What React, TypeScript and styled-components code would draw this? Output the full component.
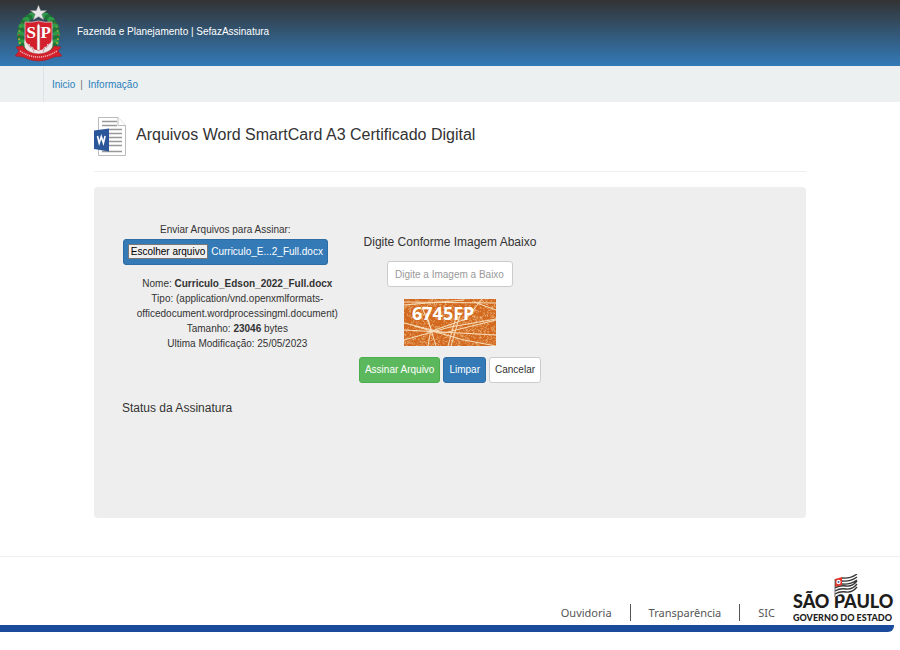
import React from "react";
import styled, { createGlobalStyle } from "styled-components";

const sans = `"Liberation Sans", Arial, sans-serif`;

const GlobalStyle = createGlobalStyle`
  *, *::before, *::after { box-sizing: border-box; }
  body {
    margin: 0;
    background: #fff;
    color: #333;
    font-family: ${sans};
    font-size: 10px;
    line-height: 15px;
  }
`;

const Header = styled.header`
  display: flex;
  align-items: center;
  gap: 15px;
  height: 66px;
  padding: 0 15px;
  background: linear-gradient(#333 0%, #337ab7 100%);
  color: #fff;
`;

const SiteName = styled.span`
  padding-bottom: 4px;
`;

const Nav = styled.nav`
  height: 36px;
  padding-left: 43px;
  background: #ecf0f1;
`;

const NavList = styled.ul`
  display: flex;
  align-items: center;
  height: 36px;
  margin: 0;
  padding: 0 8px;
  border-left: 1px solid #dde2e4;
  list-style: none;
`;

const NavItem = styled.li`
  & + &::before {
    content: "|";
    margin: 0 5px;
    color: #777;
  }
`;

const NavLink = styled.a`
  color: #2a80b9;
  text-decoration: none;
`;

const Main = styled.main`
  margin: 0 94px;
`;

const TitleBar = styled.div`
  display: flex;
  align-items: flex-start;
  gap: 10px;
  height: 70px;
  padding-top: 15px;
  border-bottom: 1px solid #eee;
`;

const Title = styled.h1`
  margin: 6px 0 0;
  font-size: 16px;
  font-weight: 400;
  line-height: 24px;
`;

const Panel = styled.section`
  display: grid;
  grid-template-columns: repeat(3, minmax(0, 1fr));
  align-content: start;
  min-height: 331px;
  margin-top: 15px;
  padding: 35px 28px;
  border-radius: 4px;
  background: #eee;
`;

const UploadColumn = styled.div`
  display: flex;
  flex-direction: column;
`;

const Upload = styled.div`
  display: flex;
  flex-direction: column;
  align-items: center;
  padding-right: 12px;
`;

const FileButton = styled.label`
  position: relative;
  display: flex;
  align-items: center;
  gap: 3px;
  height: 26px;
  margin-top: 2px;
  padding: 0 4px 1px;
  border: 1px solid #2e6da4;
  border-radius: 3px;
  background: #337ab7;
  color: #fff;
  white-space: nowrap;
`;

const FileInput = styled.input`
  position: absolute;
  inset: 0;
  width: 100%;
  opacity: 0;
`;

const FileTrigger = styled.span`
  padding: 0 2px;
  border: 1px solid #777;
  background: #efefef;
  color: #000;
  line-height: 13px;
`;

const FileInfo = styled.ul`
  margin: 11px 0 0;
  padding: 0 0 0 12px;
  list-style: none;
  text-align: center;
  overflow-wrap: break-word;
`;

const CaptchaColumn = styled.form`
  display: flex;
  flex-direction: column;
  align-items: center;
  padding-top: 10px;
`;

const CaptchaLabel = styled.label`
  font-size: 12px;
  line-height: 20px;
`;

const CaptchaInput = styled.input`
  width: 126px;
  height: 26px;
  margin: 9px 0 12px;
  padding: 0 7px;
  border: 1px solid #ccc;
  border-radius: 3px;
  background: #fff;
  color: #555;
  font: 10px/15px ${sans};
  &::placeholder { color: #999; opacity: 1; }
`;

const Actions = styled.div`
  display: flex;
  gap: 3px;
  margin-top: 11px;
`;

const tones = {
  success: ["#5cb85c", "#4cae4c", "#fff"],
  primary: ["#337ab7", "#2e6da4", "#fff"],
  plain: ["#fff", "#ccc", "#333"],
};

const Button = styled.button<{ $tone: keyof typeof tones }>`
  height: 26px;
  padding: 0 5px 2px;
  border: 1px solid ${(p) => tones[p.$tone][1]};
  border-radius: 3px;
  background: ${(p) => tones[p.$tone][0]};
  color: ${(p) => tones[p.$tone][2]};
  font: 10px/15px ${sans};
  white-space: nowrap;
`;

const Status = styled.h2`
  grid-column: 1 / -1;
  margin: 15px 0 0;
  font-size: 12px;
  font-weight: 400;
  line-height: 20px;
`;

const Footer = styled.footer`
  margin-top: 38px;
  padding-top: 17px;
  border-top: 1px solid #eee;
`;

const FooterRow = styled.div`
  display: flex;
  align-items: flex-end;
  justify-content: flex-end;
  gap: 18px;
  height: 51px;
  padding-right: 6px;
`;

const FooterLinks = styled.ul`
  display: flex;
  margin: 0 0 4px;
  padding: 0;
  list-style: none;
`;

const FooterItem = styled.li`
  & + & {
    margin-left: 18px;
    padding-left: 18px;
    border-left: 1px solid #555;
  }
`;

const FooterLink = styled.a`
  color: #555;
  font: 11px/17px "Noto Sans", sans-serif;
  text-decoration: none;
`;

const FooterBar = styled.div`
  height: 7px;
  margin-right: 6px;
  border-bottom-right-radius: 6px;
  background: #1b4c9c;
`;

function Crest() {
  const leaves = Array.from({ length: 13 }, (_, i) => {
    const a = ((-68 + i * 11) * Math.PI) / 180;
    return { x: 18 * Math.cos(a), y: 21 * Math.sin(a), i };
  });
  return (
    <svg width="47" height="57" viewBox="0 0 47 57" role="img" aria-label="Brasão de São Paulo">
      {leaves.map(({ x, y, i }) => (
        <g key={i}>
          <ellipse cx={23.5 + x} cy={30 + y} rx="3.6" ry="3" fill={i % 2 ? "#1f7438" : "#2f9a48"} />
          <ellipse cx={23.5 - x} cy={30 + y} rx="3.6" ry="3" fill={i % 2 ? "#1f7438" : "#2f9a48"} />
          <circle cx={25 + x} cy={31 + y} r="1" fill={i % 3 ? "#d9b93b" : "#c83a2c"} />
          <circle cx={22 - x} cy={31 + y} r="1" fill={i % 3 ? "#d9b93b" : "#c83a2c"} />
        </g>
      ))}
      <path d="M10 17Q17 18 23.5 16Q30 18 37 17V37Q36 47 23.5 51Q11 47 10 37Z" fill="#d3202c" stroke="#eab8b8" strokeWidth=".8" />
      <path d="M10 34q1 6 5 5-1 3 3 3 0 3 5.500 3.500 5.500-.5 5.500-3.500 4 0 3-3 4 1 5-5 3 9-5 14l-8.500 2-8.500-2Q7 43 10 34Z" fill="#eee6e6" />
      <path d="M12 38l4 5M17 42l2 5M35 38l-4 5M30 42l-2 5" fill="none" stroke="#b98088" strokeWidth=".8" />
      <path d="M22.200 21l1.300-2.500 1.300 2.500V45h-2.600Z" fill="#fff" stroke="#a89a9c" strokeWidth=".4" />
      <text x="11.500" y="33" fill="#fff" fontFamily="Liberation Serif, serif" fontWeight="700" fontSize="17">S</text>
      <text x="25.500" y="33" fill="#fff" fontFamily="Liberation Serif, serif" fontWeight="700" fontSize="17">P</text>
      <path d="M23.5 0l2.200 5.600 6-.1-4.800 3.700 2 5.900-5.400-3.400-5.400 3.400 2-5.900-4.800-3.700 6 .1Z" fill="#e8e8e8" stroke="#777" strokeWidth=".5" />
      <path d="M1 42l7-1 3 4q12.500 8 25 0l3-4 7 1-3 4 4 5-8 1q-15.500 8-31 0l-8-1 4-5Z" fill="#d3202c" stroke="#9e1a22" strokeWidth=".5" />
      <path d="M5 46q18.500 12 37 0" fill="none" stroke="#e9b0b0" strokeWidth="1.500" strokeDasharray="1.200 .8" />
    </svg>
  );
}

function WordIcon() {
  return (
    <svg width="32" height="39" viewBox="0 0 32 39" aria-hidden="true">
      <path d="M4.500.5H24l7.500 8V38.500h-27Z" fill="#fff" stroke="#bbb" />
      <path d="M24 .5v8h7.500" fill="#fff" stroke="#bbb" />
      <path d="M8 4.500h15M8 8.500h15M15 12.500h13M15 16.500h13M15 20.500h13M15 24.500h13M15 28.500h13M8 34.500h20" stroke="#999" strokeWidth="1.300" />
      <path d="M0 13.500l15-2v23L0 32Z" fill="#2b579a" />
      <path d="M3.500 19l1.700 7L7.300 19.500l2.100 6.500L11.100 19" fill="none" stroke="#fff" strokeWidth="1.600" />
    </svg>
  );
}

function makeRandom(seed: number) {
  let s = seed;
  return () => (s = (s * 16807) % 2147483647) / 2147483647;
}

const rand = makeRandom(6745);
const specks = Array.from(
  { length: 1300 },
  () => `M${(rand() * 92).toFixed(1)} ${(rand() * 47).toFixed(1)}l${(rand() * 3 - 1.5).toFixed(1)} ${(rand() * 3 - 1.5).toFixed(1)}`
).join("");

function CaptchaImage() {
  return (
    <svg width="92" height="47" viewBox="0 0 92 47" role="img" aria-label="6745FP">
      <rect width="92" height="47" fill="#d2691e" />
      <path d={specks} stroke="#efc08d" strokeWidth=".7" fill="none" />
      <path
        d="M0 3l92 1M0 6L60 1M18 8l9 22-3 17M22 14l10 33M52 18l-8 29M56 16l-9 31M0 24l40 10 52-13M0 41l46-13 46-8M0 31l92 5M10 27l50 14 32 6M78 0L62 20l-34 12M70 3l22 8"
        fill="none"
        stroke="#f7dfbd"
        strokeWidth="1"
      />
      <text x="8" y="21" fill="#fff" fontFamily="Open Sans, sans-serif" fontWeight="700" fontSize="18">6745FP</text>
    </svg>
  );
}

function StateLogo() {
  return (
    <svg width="101" height="51" viewBox="0 0 101 51" role="img" aria-label="São Paulo Governo do Estado">
      <g fill="#1d1d1b" fontFamily="Lato, sans-serif" fontWeight="900">
        <text x="0" y="34" fontSize="18">SÃO PAULO</text>
        <text x="0" y="47" fontSize="9">GOVERNO DO ESTADO</text>
      </g>
      <path d="M42 6q5-4 11-3t11-4v17q-5 5-11 4t-11 3Z" fill="#fff" />
      <path
        d="M49 4q8 1 15-4M49 7q8 1 15-4M49 10q8 1 15-4M42 14q5-3 11-2t11-5M42 17q5-3 11-2t11-5M42 20q5-3 11-2t11-5"
        fill="none"
        stroke="#333"
        strokeWidth="1.300"
      />
      <path d="M42 5l7-2v8l-7 2Z" fill="#e5352b" />
      <circle cx="45.500" cy="8" r="2.200" fill="#fff" />
      <circle cx="45.500" cy="8" r="1" fill="#3b62a8" />
      <path d="M42 5v18" stroke="#555" strokeWidth=".8" />
    </svg>
  );
}

export default function App() {
  return (
    <>
      <GlobalStyle />
      <Header>
        <Crest />
        <SiteName>Fazenda e Planejamento | SefazAssinatura</SiteName>
      </Header>
      <Nav>
        <NavList>
          <NavItem><NavLink href="#inicio">Inicio</NavLink></NavItem>
          <NavItem><NavLink href="#informacao">Informação</NavLink></NavItem>
        </NavList>
      </Nav>
      <Main>
        <TitleBar>
          <WordIcon />
          <Title>Arquivos Word SmartCard A3 Certificado Digital</Title>
        </TitleBar>
        <Panel>
          <UploadColumn>
            <Upload>
              <label htmlFor="arquivo">Enviar Arquivos para Assinar:</label>
              <FileButton>
                <FileInput id="arquivo" type="file" />
                <FileTrigger>Escolher arquivo</FileTrigger>
                <span>Curriculo_E...2_Full.docx</span>
              </FileButton>
            </Upload>
            <FileInfo>
              <li>Nome: <strong>Curriculo_Edson_2022_Full.docx</strong></li>
              <li>Tipo: (application/vnd.openxmlformats-officedocument.wordprocessingml.document)</li>
              <li>Tamanho: <strong>23046</strong> bytes</li>
              <li>Ultima Modificação: 25/05/2023</li>
            </FileInfo>
          </UploadColumn>
          <CaptchaColumn>
            <CaptchaLabel htmlFor="captcha">Digite Conforme Imagem Abaixo</CaptchaLabel>
            <CaptchaInput id="captcha" type="text" placeholder="Digite a Imagem a Baixo" />
            <CaptchaImage />
            <Actions>
              <Button type="button" $tone="success">Assinar Arquivo</Button>
              <Button type="button" $tone="primary">Limpar</Button>
              <Button type="button" $tone="plain">Cancelar</Button>
            </Actions>
          </CaptchaColumn>
          <Status>Status da Assinatura</Status>
        </Panel>
      </Main>
      <Footer>
        <FooterRow>
          <FooterLinks>
            <FooterItem><FooterLink href="#ouvidoria">Ouvidoria</FooterLink></FooterItem>
            <FooterItem><FooterLink href="#transparencia">Transparência</FooterLink></FooterItem>
            <FooterItem><FooterLink href="#sic">SIC</FooterLink></FooterItem>
          </FooterLinks>
          <StateLogo />
        </FooterRow>
        <FooterBar />
      </Footer>
    </>
  );
}
